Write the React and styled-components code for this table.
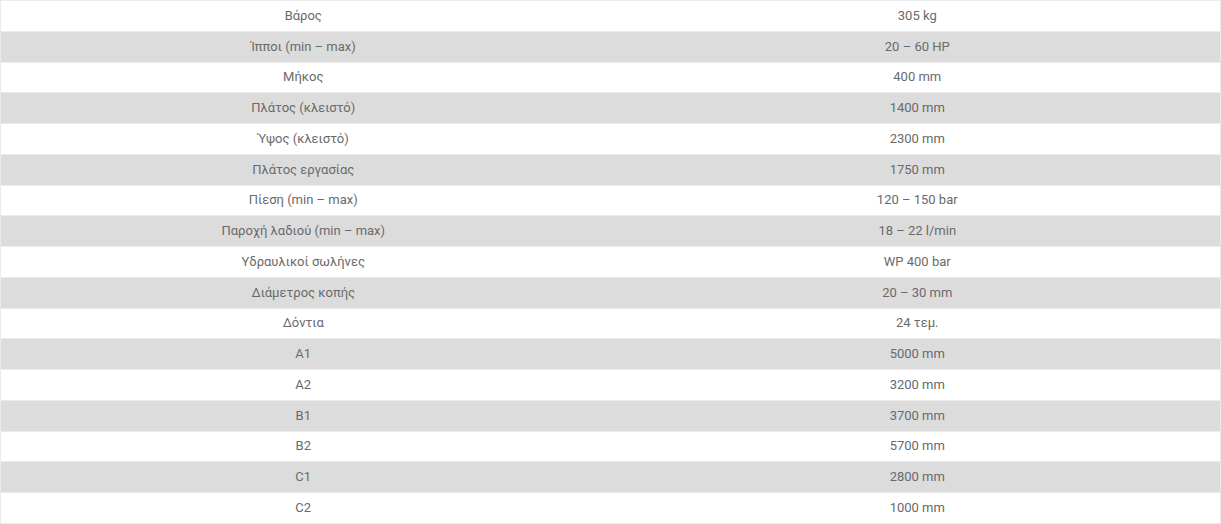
import React from "react";
import styled, { createGlobalStyle } from "styled-components";

const Global = createGlobalStyle`
  html, body { margin: 0; padding: 0; background: #fff; }
  body { font-family: Roboto, "Noto Sans", sans-serif; }
`;

const Table = styled.table`
  width: 1220px;
  border-collapse: collapse;
  border: 1px solid #ebebeb;
  table-layout: fixed;
  font-family: Roboto, "Noto Sans", sans-serif;
  font-size: 13px;
  color: #6a6a6a;
`;

const Row = styled.tr`
  background: ${(p) => (p.$striped ? "#dcdcdc" : "#ffffff")};
`;

const Cell = styled.td`
  width: ${(p) => (p.$value ? "615px" : "605px")};
  height: 30.75px;
  padding: ${(p) => (p.$value ? "0 8px 0 17px" : "0 8px")};
  box-sizing: border-box;
  text-align: center;
  vertical-align: middle;
  border-top: 1px solid #ebebeb;
  border-bottom: 1px solid #ebebeb;
  line-height: 18px;
`;

const rows = [
  ["Βάρος", "305 kg"],
  ["Ίπποι (min – max)", "20 – 60 HP"],
  ["Μήκος", "400 mm"],
  ["Πλάτος (κλειστό)", "1400 mm"],
  ["Ύψος (κλειστό)", "2300 mm"],
  ["Πλάτος εργασίας", "1750 mm"],
  ["Πίεση (min – max)", "120 – 150 bar"],
  ["Παροχή λαδιού (min – max)", "18 – 22 l/min"],
  ["Υδραυλικοί σωλήνες", "WP 400 bar"],
  ["Διάμετρος κοπής", "20 – 30 mm"],
  ["Δόντια", "24 τεμ."],
  ["A1", "5000 mm"],
  ["A2", "3200 mm"],
  ["B1", "3700 mm"],
  ["B2", "5700 mm"],
  ["C1", "2800 mm"],
  ["C2", "1000 mm"],
];

export default function App() {
  return (
    <>
      <Global />
      <Table>
        <tbody>
          {rows.map(([k, v], i) => (
            <Row key={k} $striped={i % 2 === 1}>
              <Cell>{k}</Cell>
              <Cell $value>{v}</Cell>
            </Row>
          ))}
        </tbody>
      </Table>
    </>
  );
}
